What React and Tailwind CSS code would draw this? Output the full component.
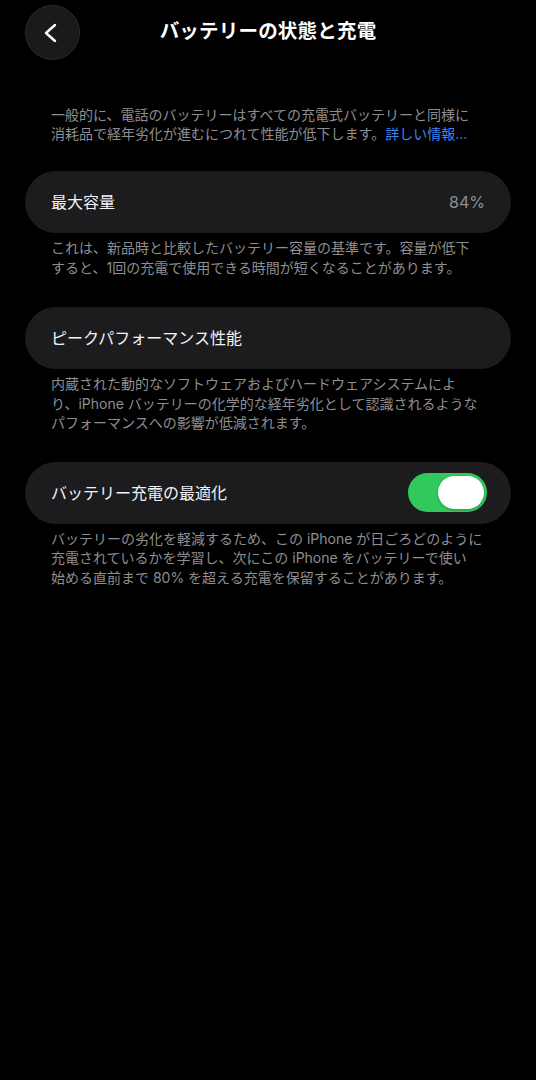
// バッテリーの状態と充電 — iOS settings screen, dark mode
const FONT = { fontFamily: '"Inter", "Noto Sans CJK JP", sans-serif' };

function Caption({ children }) {
  return (
    <p className="pt-[5px] px-[26px] text-[14px] leading-[19.5px] text-[#8e8e93] whitespace-nowrap">
      {children}
    </p>
  );
}

function Row({ children }) {
  return (
    <div className="h-[62px] rounded-full bg-[#1c1c1e] px-[26px] flex items-center justify-between">
      {children}
    </div>
  );
}

function Toggle() {
  return (
    <div className="-mr-[2px] w-[79px] h-[39px] rounded-full bg-[#31c95b] p-[3px] flex justify-end">
      <div className="w-[46px] h-[33px] rounded-full bg-white shadow-[0_1px_3px_rgba(0,0,0,0.25)]" />
    </div>
  );
}

export default function App() {
  return (
    <div className="min-h-[1080px] bg-black text-white" style={FONT}>
      <header className="relative h-[64px] flex items-center justify-center">
        <button className="absolute left-[25px] top-[5px] w-[55px] h-[55px] rounded-full bg-[#1a1a1c] border border-[#2a2a2c] flex items-center justify-center">
          <svg width="22" height="22" viewBox="0 0 22 22" fill="none" className="-ml-[3px] mt-[1px]">
            <path d="M15 3 L6 11 L15 19" stroke="white" strokeWidth="2.4" strokeLinecap="round" strokeLinejoin="round" />
          </svg>
        </button>
        <h1 className="text-[19.5px] font-bold tracking-[0.2px]">バッテリーの状態と充電</h1>
      </header>

      <div className="px-[25px]">
        <p className="mt-[41px] px-[26px] text-[14px] leading-[19px] text-[#8e8e93] whitespace-nowrap">
          一般的に、電話のバッテリーはすべての充電式バッテリーと同様に
          <br />
          消耗品で経年劣化が進むにつれて性能が低下します。
          <span className="text-[#3d84f2]">詳しい情報...</span>
        </p>

        <div className="mt-[28px]">
          <Row>
            <span className="text-[16px] text-[#f2f2f7]">最大容量</span>
            <span className="text-[16px] text-[#8e8e93]">84%</span>
          </Row>
          <Caption>
            これは、新品時と比較したバッテリー容量の基準です。容量が低下
            <br />
            すると、1回の充電で使用できる時間が短くなることがあります。
          </Caption>
        </div>

        <div className="mt-[30px]">
          <Row>
            <span className="text-[16px] text-[#f2f2f7]">ピークパフォーマンス性能</span>
          </Row>
          <Caption>
            内蔵された動的なソフトウェアおよびハードウェアシステムによ
            <br />
            り、iPhone バッテリーの化学的な経年劣化として認識されるような
            <br />
            パフォーマンスへの影響が低減されます。
          </Caption>
        </div>

        <div className="mt-[29px]">
          <Row>
            <span className="text-[16px] text-[#f2f2f7]">バッテリー充電の最適化</span>
            <Toggle />
          </Row>
          <Caption>
            バッテリーの劣化を軽減するため、この iPhone が日ごろどのように
            <br />
            充電されているかを学習し、次にこの iPhone をバッテリーで使い
            <br />
            始める直前まで 80% を超える充電を保留することがあります。
          </Caption>
        </div>
      </div>
    </div>
  );
}
